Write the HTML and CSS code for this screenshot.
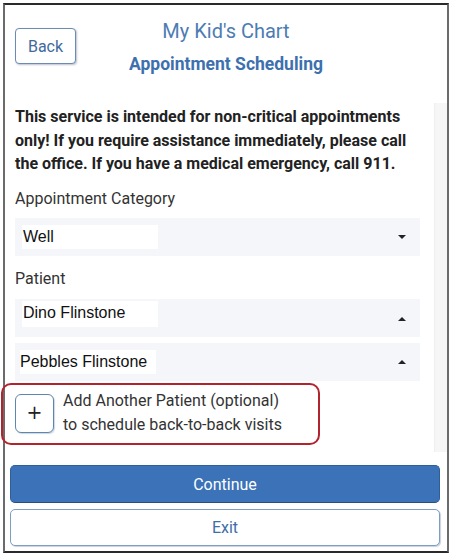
FILE: index.html
```html
<!DOCTYPE html>
<html lang="en">
<head>
<meta charset="utf-8">
<title>My Kid's Chart - Appointment Scheduling</title>
<link rel="stylesheet" href="styles.css">
</head>
<body>
<div class="frame">
  <header class="header">
    <div class="header-side">
      <button class="back-btn" type="button">Back</button>
    </div>
    <div class="titles">
      <div class="app-title">My Kid's Chart</div>
      <div class="page-title">Appointment Scheduling</div>
    </div>
    <div class="header-side"></div>
  </header>

  <div class="body">
    <div class="content">
      <p class="warning">This service is intended for non-critical appointments only! If you require assistance immediately, please call the office. If you have a medical emergency, call 911.</p>

      <div class="field-label first">Appointment Category</div>
      <div class="select">
        <span class="select-value">Well</span>
        <span class="caret down"></span>
      </div>

      <div class="field-label">Patient</div>
      <div class="select select-top">
        <span class="select-value v-dino">Dino Flinstone</span>
        <span class="caret up"></span>
      </div>
      <div class="select select-second">
        <span class="select-value v-pebbles">Pebbles Flinstone</span>
        <span class="caret up"></span>
      </div>

      <div class="add-row">
        <button class="plus-btn" type="button">+</button>
        <div class="add-text">Add Another Patient (optional)<br>to schedule back-to-back visits</div>
      </div>
    </div>
    <div class="scroll-track"></div>
  </div>

  <footer class="footer">
    <button class="btn btn-primary" type="button">Continue</button>
    <button class="btn btn-outline" type="button">Exit</button>
  </footer>
</div>
</body>
</html>
```

FILE: styles.css
```css
html, body {
  margin: 0;
  padding: 0;
  background: #ffffff;
}

body {
  font-family: Roboto, "Liberation Sans", Arial, sans-serif;
  color: #222;
}

.frame {
  box-sizing: border-box;
  margin: 3px 0 0 3px;
  width: 446px;
  height: 550px;
  border: 2px solid #6b6b6b;
  border-top-color: #2a2a2a;
  border-bottom-color: #2a2a2a;
  display: flex;
  flex-direction: column;
}

/* Header */
.header {
  box-sizing: border-box;
  height: 98px;
  padding: 12px 0 0 0;
  display: grid;
  grid-template-columns: 1fr auto 1fr;
  align-items: start;
}

.back-btn {
  margin: 11px 0 0 10px;
  width: 61px;
  height: 36px;
  background: #fff;
  border: 1px solid #6b8bb3;
  border-radius: 4px;
  box-shadow: 1px 1px 2px rgba(60, 80, 110, 0.35);
  font-family: Roboto, "Liberation Sans", sans-serif;
  font-size: 16px;
  color: #3f6a9c;
  padding: 0;
}

.titles {
  display: flex;
  flex-direction: column;
  align-items: center;
  gap: 7px;
}

.app-title {
  font-size: 20px;
  line-height: 28px;
  color: #4d7cb4;
}

.page-title {
  font-size: 17.5px;
  line-height: 24px;
  font-weight: bold;
  color: #3d70ae;
}

/* Body */
.body {
  height: 349px;
  display: flex;
}

.content {
  flex: 1;
  padding: 2px 14px 0 10px;
  display: flex;
  flex-direction: column;
}

.scroll-track {
  width: 13px;
  background: #f6f6f6;
  border-left: 1px solid #efefef;
  box-sizing: border-box;
}

.warning {
  margin: 0;
  font-size: 16px;
  line-height: 23.7px;
  font-weight: bold;
  color: #222;
}

.field-label {
  margin-top: 11px;
  font-size: 16px;
  line-height: 24px;
  color: #333;
}

.field-label.first {
  margin-top: 11px;
}

.select {
  margin-top: 7px;
  height: 38px;
  box-sizing: border-box;
  background: #f4f6f9;
  display: flex;
  align-items: center;
  justify-content: space-between;
  padding: 0 14px 0 7px;
}

.select-top {
  margin-top: 8px;
  align-items: flex-start;
  padding-top: 2px;
}

.select-second {
  margin-top: 6px;
}

.select-value {
  box-sizing: border-box;
  width: 136px;
  height: 24px;
  background: #ffffff;
  font-family: "Liberation Sans", Arial, sans-serif;
  font-size: 16px;
  line-height: 24px;
  color: #111;
  padding-left: 1px;
}

.v-dino {
  height: 26px;
  line-height: 24px;
  padding-left: 1px;
}

.v-pebbles {
  width: 136px;
  margin-left: -2px;
  padding-left: 0;
}

.select-top .caret {
  margin-top: 16px;
}

.caret {
  width: 0;
  height: 0;
  border-left: 4px solid transparent;
  border-right: 4px solid transparent;
}

.caret.down {
  border-top: 4px solid #222;
}

.caret.up {
  border-bottom: 4px solid #222;
}

/* Add another patient */
.add-row {
  position: relative;
  margin-top: 8px;
  display: flex;
  align-items: center;
  gap: 9px;
  width: 290px;
}

.add-row::after {
  content: "";
  position: absolute;
  left: -14px;
  top: -6px;
  width: 319px;
  height: 62px;
  box-sizing: border-box;
  border: 2px solid #b3232e;
  border-radius: 10px;
  pointer-events: none;
}

.plus-btn {
  width: 39px;
  height: 39px;
  flex: none;
  box-sizing: border-box;
  background: #fff;
  border: 1.5px solid #5b88b0;
  border-radius: 6px;
  box-shadow: 1px 1px 1px rgba(60, 90, 120, 0.25);
  font-family: "DejaVu Sans", sans-serif;
  font-size: 19px;
  line-height: 1;
  color: #222;
  padding: 0 0 2px 0;
}

.add-text {
  font-size: 16px;
  line-height: 24px;
  color: #333;
  white-space: nowrap;
}

/* Footer */
.footer {
  padding: 13px 7px 0 5px;
  display: flex;
  flex-direction: column;
  gap: 6px;
}

.btn {
  width: 100%;
  box-sizing: border-box;
  border-radius: 5px;
  font-family: Roboto, "Liberation Sans", sans-serif;
  font-size: 16px;
  padding: 0;
}

.btn-primary {
  height: 38px;
  background: #3b72b8;
  border: 1px solid #2f5f9a;
  border-bottom-color: #26507f;
  color: #ffffff;
}

.btn-outline {
  height: 37px;
  background: #ffffff;
  border: 1px solid #7d9dc2;
  box-shadow: 1px 1px 1px rgba(80, 100, 130, 0.3);
  color: #3f6ea6;
}
```
